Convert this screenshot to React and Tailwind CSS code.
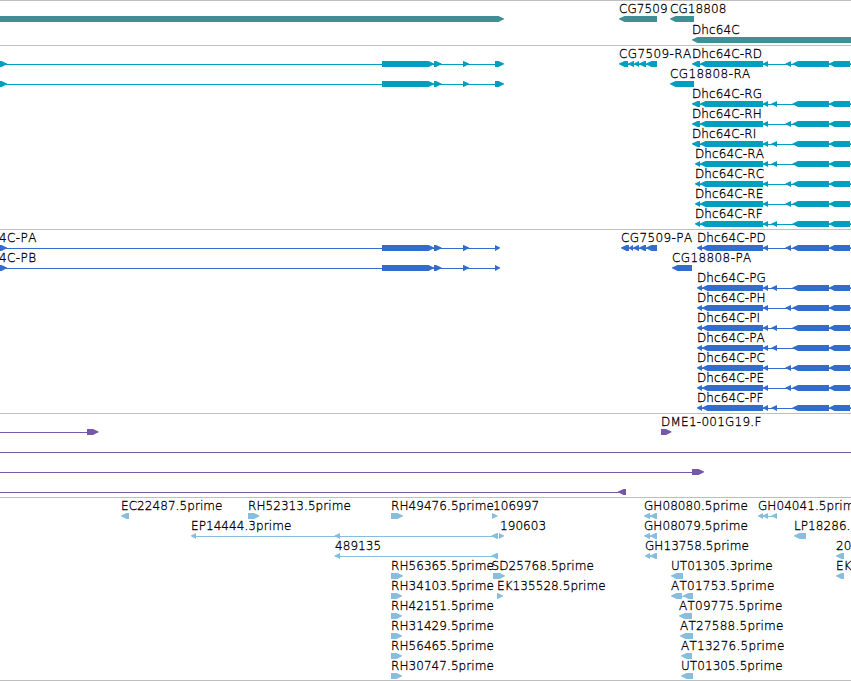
import clsx from 'clsx';

// Exon layouts shared by the transcript and protein tracks, as [start, end]
const upstream = (last) => ({ dir: 'right', blocks: [[-5, 7], [382, 434], [434, 441.5], [463, 469], [495, last]] });

const dhc = (name, start, split, small) => ({
  name,
  at: start,
  dir: 'left',
  blocks: [[start, split], [split, 763], [763, 768], [small, small + 5.5], [792.5, 829], [829, 850], [850, 870]],
});

const one = (name, start, end, dir = 'left', at = start) => ({ name, at, dir, blocks: [[start, end]] });

const TRACKS = [
  {
    id: 'genes',
    color: 'text-[#408f95]',
    rowHeight: 'h-[21px]',
    pad: 'pb-[2px]',
    rows: [
      [one('', -10, 504, 'right'), one('CG7509', 619, 657), one('CG18808', 670, 694)],
      [one('Dhc64C', 692, 870)],
    ],
  },
  {
    id: 'transcripts',
    color: 'text-[#009fc0]',
    rowHeight: 'h-5',
    pad: 'pb-[3px]',
    rows: [
      [
        upstream(504),
        { name: 'CG7509-RA', at: 619, dir: 'left', blocks: [[619, 628], [628, 634], [634, 639], [639, 646], [646, 657]] },
        dhc('Dhc64C-RD', 692, 700, 785.5),
      ],
      [upstream(504), one('CG18808-RA', 670, 694)],
      [dhc('Dhc64C-RG', 692, 700, 771.5)],
      [dhc('Dhc64C-RH', 692, 700, 785.5)],
      [dhc('Dhc64C-RI', 692, 700, 771.5)],
      [dhc('Dhc64C-RA', 695, 700, 771.5)],
      [dhc('Dhc64C-RC', 695, 700, 785.5)],
      [dhc('Dhc64C-RE', 695, 700, 785.5)],
      [dhc('Dhc64C-RF', 695, 700, 771.5)],
    ],
  },
  {
    id: 'proteins',
    color: 'text-[#326dcc]',
    rowHeight: 'h-5',
    pad: 'pb-[3px]',
    rows: [
      [
        { ...upstream(500), name: '4C-PA', at: -1 },
        { name: 'CG7509-PA', at: 621, dir: 'left', blocks: [[621, 629], [629, 633], [633, 639], [639, 646], [646, 657]] },
        dhc('Dhc64C-PD', 697, 702, 785.5),
      ],
      [{ ...upstream(500), name: '4C-PB', at: -1 }, one('CG18808-PA', 672, 692)],
      [dhc('Dhc64C-PG', 697, 702, 771.5)],
      [dhc('Dhc64C-PH', 697, 702, 785.5)],
      [dhc('Dhc64C-PI', 697, 702, 771.5)],
      [dhc('Dhc64C-PA', 697, 702, 771.5)],
      [dhc('Dhc64C-PC', 697, 702, 785.5)],
      [dhc('Dhc64C-PE', 697, 702, 785.5)],
      [dhc('Dhc64C-PF', 697, 702, 771.5)],
    ],
  },
  {
    id: 'clones',
    color: 'text-[#7757a7]',
    rowHeight: 'h-5',
    pad: 'pb-[3px]',
    rows: [
      [{ dir: 'right', blocks: [[-20, -10], [87, 98.5]] }, one('DME1-001G19.F', 661, 671.5, 'right')],
      [{ dir: 'right', blocks: [[-20, -10], [860, 870]] }],
      [{ dir: 'right', blocks: [[-20, -10], [692, 704]] }],
      [{ dir: 'left', blocks: [[-20, -10], [618, 626]] }],
    ],
  },
  {
    id: 'ests',
    color: 'text-[#87bddd]',
    rowHeight: 'h-5',
    pad: 'pb-[2px]',
    rows: [
      [
        one('EC22487.5prime', 121, 129),
        one('RH52313.5prime', 248, 259.5, 'right'),
        one('RH49476.5prime', 391, 403, 'right'),
        one('106997', 492, 497.5, 'right', 493),
        { name: 'GH08080.5prime', at: 644, dir: 'left', blocks: [[644, 650], [650, 657]] },
        { name: 'GH04041.5prim', at: 758, dir: 'left', blocks: [[758, 763], [763, 768], [771.5, 777]] },
      ],
      [
        { name: 'EP14444.3prime', at: 191, dir: 'left', blocks: [[191, 196], [334.5, 340], [491.5, 498]] },
        one('190603', 499, 504, 'right', 500),
        { name: 'GH08079.5prime', at: 644, dir: 'left', blocks: [[644, 650], [650, 657]] },
        one('LP18286.', 794, 806),
      ],
      [
        { name: '489135', at: 335, dir: 'left', blocks: [[334.5, 340], [491.5, 498]] },
        { name: 'GH13758.5prime', at: 645, dir: 'left', blocks: [[645, 650], [650, 657]] },
        one('20', 836, 844),
      ],
      [
        one('RH56365.5prime', 391, 403, 'right'),
        one('SD25768.5prime', 493, 505, 'right', 491.5),
        one('UT01305.3prime', 671, 683),
        one('EK', 836, 844),
      ],
      [
        one('RH34103.5prime', 391, 402, 'right'),
        one('EK135528.5prime', 497, 503, 'right'),
        { name: 'AT01753.5prime', at: 671, dir: 'left', blocks: [[671, 682], [683, 693]] },
      ],
      [one('RH42151.5prime', 391, 402, 'right'), one('AT09775.5prime', 679, 692)],
      [one('RH31429.5prime', 391, 402, 'right'), one('AT27588.5prime', 680, 693)],
      [one('RH56465.5prime', 391, 402, 'right'), one('AT13276.5prime', 681, 692)],
      [one('RH30747.5prime', 391, 402, 'right'), one('UT01305.5prime', 681, 693)],
    ],
  },
];

// Label spacing differs a little between name families
const tracking = (name) => {
  if (/^(CG\d+|4C)-/.test(name)) return 'tracking-[0.4px]';
  if (/^(AT|DME)/.test(name)) return 'tracking-[0.25px]';
  if (/^Dhc/.test(name)) return 'tracking-[0.12px]';
  return 'tracking-[0.07px]';
};

// A block is a 6px bar with a pointed end on the strand side
const blockPoints = ([start, end], dir) => {
  const tip = Math.min(5.5, end - start);
  if (dir === 'right') {
    return `${start},15 ${end - tip},15 ${end},17.6 ${end},18.2 ${end - tip},21 ${start},21`;
  }
  return `${end},15 ${start + tip},15 ${start},17.6 ${start},18.2 ${start + tip},21 ${end},21`;
};

function Feature({ feature }) {
  const { dir, blocks } = feature;
  const first = blocks[0][0];
  const last = blocks[blocks.length - 1][1];

  return (
    <g>
      {blocks.length > 1 && <rect x={first + 1} y="18" width={last - first - 2} height="1" />}
      {blocks.map((block) => (
        <polygon key={block[0]} points={blockPoints(block, dir)} />
      ))}
    </g>
  );
}

function Row({ features, height }) {
  return (
    <div className={clsx('relative', height)}>
      <svg width="851" height="22" fill="currentColor" className="absolute left-0 top-0">
        {features.map((feature, i) => (
          <Feature key={i} feature={feature} />
        ))}
      </svg>
      {features.filter((feature) => feature.name).map((feature) => (
        <span
          key={feature.name}
          className={clsx('absolute top-px whitespace-nowrap text-black [-webkit-text-stroke:0.3px_black]', tracking(feature.name))}
          style={{ left: feature.at }}
        >
          {feature.name}
        </span>
      ))}
    </div>
  );
}

export default function App() {
  return (
    <main className="flex h-[681px] w-[851px] flex-col overflow-hidden border-b border-[#bebebe] bg-white font-['DejaVu_Sans_Light','DejaVu_Sans',sans-serif] text-[12px] leading-[15px] [font-kerning:none]">
      {TRACKS.map((track) => (
        <section key={track.id} className={clsx('shrink-0 border-t border-[#bebebe]', track.color, track.pad)}>
          {track.rows.map((row, i) => (
            <Row key={i} features={row} height={track.rowHeight} />
          ))}
        </section>
      ))}
    </main>
  );
}
